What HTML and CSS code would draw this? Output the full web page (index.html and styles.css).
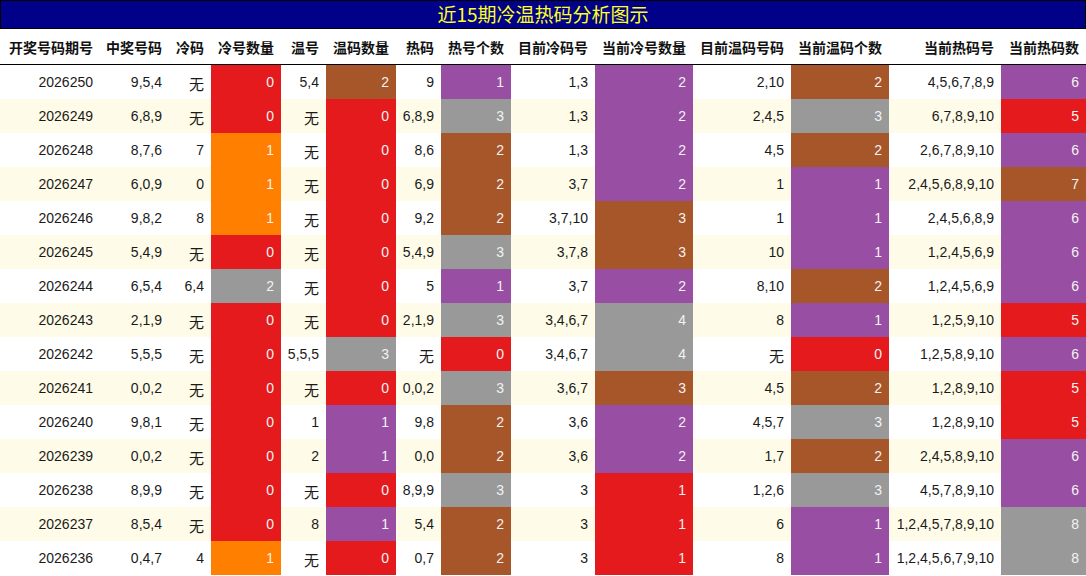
FILE: index.html
```html
<!DOCTYPE html>
<html lang="zh-CN">
<head>
<meta charset="utf-8">
<title>近15期冷温热码分析图示</title>
<link rel="stylesheet" href="styles.css">
</head>
<body>
<div class="title">近15期冷温热码分析图示</div>
<table class="grid">
<colgroup>
<col class="w100"><col class="w69"><col class="w42"><col class="w70"><col class="w45"><col class="w70"><col class="w45"><col class="w70"><col class="w84"><col class="w98"><col class="w98"><col class="w98"><col class="w112"><col class="w85">
</colgroup>
<thead>
<tr><th>开奖号码期号</th><th>中奖号码</th><th>冷码</th><th>冷号数量</th><th>温号</th><th>温码数量</th><th>热码</th><th>热号个数</th><th>目前冷码号</th><th>当前冷号数量</th><th>目前温码号码</th><th>当前温码个数</th><th>当前热码号</th><th>当前热码数</th></tr>
</thead>
<tbody>
<tr><td>2026250</td><td>9,5,4</td><td class="cn">无</td><td class="red">0</td><td>5,4</td><td class="brn">2</td><td>9</td><td class="pur">1</td><td>1,3</td><td class="pur">2</td><td>2,10</td><td class="brn">2</td><td>4,5,6,7,8,9</td><td class="pur">6</td></tr>
<tr><td>2026249</td><td>6,8,9</td><td class="cn">无</td><td class="red">0</td><td class="cn">无</td><td class="red">0</td><td>6,8,9</td><td class="gry">3</td><td>1,3</td><td class="pur">2</td><td>2,4,5</td><td class="gry">3</td><td>6,7,8,9,10</td><td class="red">5</td></tr>
<tr><td>2026248</td><td>8,7,6</td><td>7</td><td class="org">1</td><td class="cn">无</td><td class="red">0</td><td>8,6</td><td class="brn">2</td><td>1,3</td><td class="pur">2</td><td>4,5</td><td class="brn">2</td><td>2,6,7,8,9,10</td><td class="pur">6</td></tr>
<tr><td>2026247</td><td>6,0,9</td><td>0</td><td class="org">1</td><td class="cn">无</td><td class="red">0</td><td>6,9</td><td class="brn">2</td><td>3,7</td><td class="pur">2</td><td>1</td><td class="pur">1</td><td>2,4,5,6,8,9,10</td><td class="brn">7</td></tr>
<tr><td>2026246</td><td>9,8,2</td><td>8</td><td class="org">1</td><td class="cn">无</td><td class="red">0</td><td>9,2</td><td class="brn">2</td><td>3,7,10</td><td class="brn">3</td><td>1</td><td class="pur">1</td><td>2,4,5,6,8,9</td><td class="pur">6</td></tr>
<tr><td>2026245</td><td>5,4,9</td><td class="cn">无</td><td class="red">0</td><td class="cn">无</td><td class="red">0</td><td>5,4,9</td><td class="gry">3</td><td>3,7,8</td><td class="brn">3</td><td>10</td><td class="pur">1</td><td>1,2,4,5,6,9</td><td class="pur">6</td></tr>
<tr><td>2026244</td><td>6,5,4</td><td>6,4</td><td class="gry">2</td><td class="cn">无</td><td class="red">0</td><td>5</td><td class="pur">1</td><td>3,7</td><td class="pur">2</td><td>8,10</td><td class="brn">2</td><td>1,2,4,5,6,9</td><td class="pur">6</td></tr>
<tr><td>2026243</td><td>2,1,9</td><td class="cn">无</td><td class="red">0</td><td class="cn">无</td><td class="red">0</td><td>2,1,9</td><td class="gry">3</td><td>3,4,6,7</td><td class="gry">4</td><td>8</td><td class="pur">1</td><td>1,2,5,9,10</td><td class="red">5</td></tr>
<tr><td>2026242</td><td>5,5,5</td><td class="cn">无</td><td class="red">0</td><td>5,5,5</td><td class="gry">3</td><td class="cn">无</td><td class="red">0</td><td>3,4,6,7</td><td class="gry">4</td><td class="cn">无</td><td class="red">0</td><td>1,2,5,8,9,10</td><td class="pur">6</td></tr>
<tr><td>2026241</td><td>0,0,2</td><td class="cn">无</td><td class="red">0</td><td class="cn">无</td><td class="red">0</td><td>0,0,2</td><td class="gry">3</td><td>3,6,7</td><td class="brn">3</td><td>4,5</td><td class="brn">2</td><td>1,2,8,9,10</td><td class="red">5</td></tr>
<tr><td>2026240</td><td>9,8,1</td><td class="cn">无</td><td class="red">0</td><td>1</td><td class="pur">1</td><td>9,8</td><td class="brn">2</td><td>3,6</td><td class="pur">2</td><td>4,5,7</td><td class="gry">3</td><td>1,2,8,9,10</td><td class="red">5</td></tr>
<tr><td>2026239</td><td>0,0,2</td><td class="cn">无</td><td class="red">0</td><td>2</td><td class="pur">1</td><td>0,0</td><td class="brn">2</td><td>3,6</td><td class="pur">2</td><td>1,7</td><td class="brn">2</td><td>2,4,5,8,9,10</td><td class="pur">6</td></tr>
<tr><td>2026238</td><td>8,9,9</td><td class="cn">无</td><td class="red">0</td><td class="cn">无</td><td class="red">0</td><td>8,9,9</td><td class="gry">3</td><td>3</td><td class="red">1</td><td>1,2,6</td><td class="gry">3</td><td>4,5,7,8,9,10</td><td class="pur">6</td></tr>
<tr><td>2026237</td><td>8,5,4</td><td class="cn">无</td><td class="red">0</td><td>8</td><td class="pur">1</td><td>5,4</td><td class="brn">2</td><td>3</td><td class="red">1</td><td>6</td><td class="pur">1</td><td>1,2,4,5,7,8,9,10</td><td class="gry">8</td></tr>
<tr><td>2026236</td><td>0,4,7</td><td>4</td><td class="org">1</td><td class="cn">无</td><td class="red">0</td><td>0,7</td><td class="brn">2</td><td>3</td><td class="red">1</td><td>8</td><td class="pur">1</td><td>1,2,4,5,6,7,9,10</td><td class="gry">8</td></tr>
</tbody>
</table>
</body>
</html>
```

FILE: styles.css
```css
html, body {
  margin: 0;
  padding: 0;
  background: #ffffff;
}

body {
  font-family: "Liberation Sans", "Noto Sans CJK SC", sans-serif;
  width: 1086px;
}

.title {
  box-sizing: border-box;
  height: 29px;
  background: #000088;
  border: 1px solid #000000;
  color: #ffff22;
  font-family: "Noto Sans CJK SC", sans-serif;
  font-size: 19px;
  line-height: 26px;
  text-align: center;
}

.grid {
  width: 1086px;
  table-layout: fixed;
  border-collapse: separate;
  border-spacing: 0;
}

.w100 { width: 100px; }
.w69 { width: 69px; }
.w42 { width: 42px; }
.w70 { width: 70px; }
.w45 { width: 45px; }
.w84 { width: 84px; }
.w98 { width: 98px; }
.w112 { width: 112px; }
.w85 { width: 85px; }

.grid th {
  height: 35px;
  padding: 0 7px 0 0;
  font-family: "Noto Sans CJK SC", sans-serif;
  font-weight: bold;
  font-size: 14px;
  line-height: 20px;
  color: #111111;
  text-align: right;
  white-space: nowrap;
  border-bottom: 1px solid #000000;
  vertical-align: middle;
}

.grid td {
  box-sizing: border-box;
  height: 34px;
  padding: 0 7px 0 0;
  font-size: 14px;
  line-height: 18px;
  color: #1a1a1a;
  text-align: right;
  white-space: nowrap;
  vertical-align: middle;
  overflow: hidden;
}

.grid tbody tr:nth-child(even) td {
  background: #fefce8;
}

.grid td.cn {
  font-family: "Noto Sans CJK SC", sans-serif;
  font-size: 15px;
  line-height: 18px;
  padding-top: 4px;
}

.grid tbody tr td.red { background: #e41a1c; color: #f2f2f2; }
.grid tbody tr td.org { background: #ff7f00; color: #f2f2f2; }
.grid tbody tr td.brn { background: #a65628; color: #f2f2f2; }
.grid tbody tr td.pur { background: #984ea3; color: #f2f2f2; }
.grid tbody tr td.gry { background: #999999; color: #f2f2f2; }
```
